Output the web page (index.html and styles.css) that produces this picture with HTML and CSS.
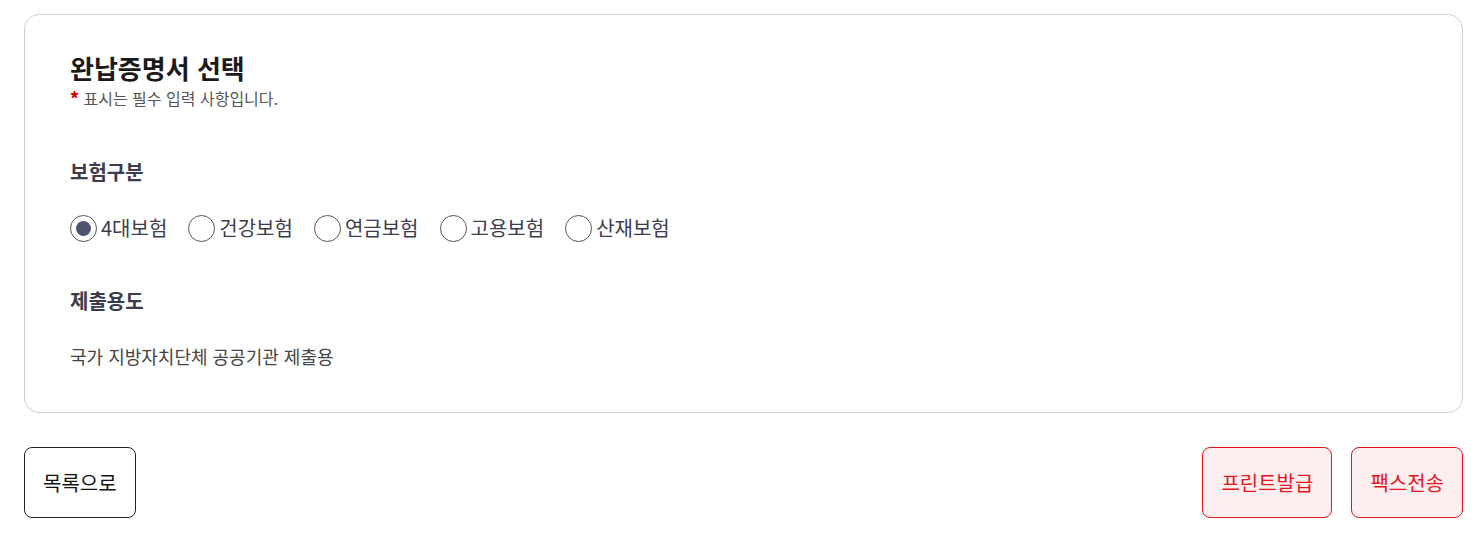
FILE: index.html
```html
<!DOCTYPE html>
<html lang="ko">
<head>
  <meta charset="UTF-8" />
  <title>완납증명서 선택</title>
  <link rel="stylesheet" href="styles.css">
</head>
<body>
  <div class="wrap">
    <div class="card">
      <h1 class="title">완납증명서 선택</h1>
      <p class="req"><span class="star">*</span> 표시는 필수 입력 사항입니다.</p>

      <h2 class="label">보험구분</h2>
      <div class="radios">
        <label class="radio"><span class="dot on"></span>4대보험</label>
        <label class="radio"><span class="dot"></span>건강보험</label>
        <label class="radio"><span class="dot"></span>연금보험</label>
        <label class="radio"><span class="dot"></span>고용보험</label>
        <label class="radio"><span class="dot"></span>산재보험</label>
      </div>

      <h2 class="label">제출용도</h2>
      <p class="value">국가 지방자치단체 공공기관 제출용</p>
    </div>

    <div class="actions">
      <button class="btn">목록으로</button>
      <div class="right">
        <button class="btn red">프린트발급</button>
        <button class="btn red">팩스전송</button>
      </div>
    </div>
  </div>
</body>
</html>
```

FILE: styles.css
```css
body {
  margin: 0;
  padding: 14px 18px 0 24px;
  font-family: "Noto Sans CJK KR", "Noto Sans", sans-serif;
  color: #222;
  background: #fff;
}

.card {
  border: 1px solid #cfcfcf;
  border-radius: 15px;
  padding: 36px 45px 0;
  height: 399px;
  box-sizing: border-box;
}

.title {
  margin: 0;
  font-size: 26px;
  font-weight: bold;
  line-height: 34px;
  color: #1a1a1a;
}

.req {
  margin: 0;
  padding-top: 3px;
  font-size: 16px;
  line-height: 20px;
  color: #555;
}

.star {
  color: #d00;
  font-weight: 900;
  font-size: 17px;
}

.label {
  margin: 51px 0 0;
  font-size: 20px;
  font-weight: bold;
  line-height: 26px;
  color: #3c3c4c;
}

.radios {
  display: flex;
  gap: 21px;
  margin-top: 29px;
}

.radio {
  display: flex;
  align-items: center;
  gap: 4px;
  font-size: 20px;
  line-height: 28px;
  color: #3c3c4c;
}

.dot {
  width: 27px;
  height: 27px;
  border: 1px solid #555;
  border-radius: 50%;
  box-sizing: border-box;
  display: flex;
  align-items: center;
  justify-content: center;
}

.dot.on::after {
  content: "";
  width: 15px;
  height: 15px;
  border-radius: 50%;
  background: #4e5370;
}

.radios + .label {
  margin-top: 46px;
}

.value {
  margin: 31px 0 0;
  font-size: 18px;
  line-height: 22px;
  color: #444;
}

.actions {
  display: flex;
  justify-content: space-between;
  margin-top: 34px;
}

.right {
  display: flex;
  gap: 19px;
}

.btn {
  height: 71px;
  padding: 0 18px;
  border: 1px solid #222;
  border-radius: 8px;
  background: #fff;
  font-family: inherit;
  font-size: 20px;
  color: #111;
}

.btn.red {
  border-color: #e8141c;
  background: #fdeff0;
  color: #e8141c;
}
```
